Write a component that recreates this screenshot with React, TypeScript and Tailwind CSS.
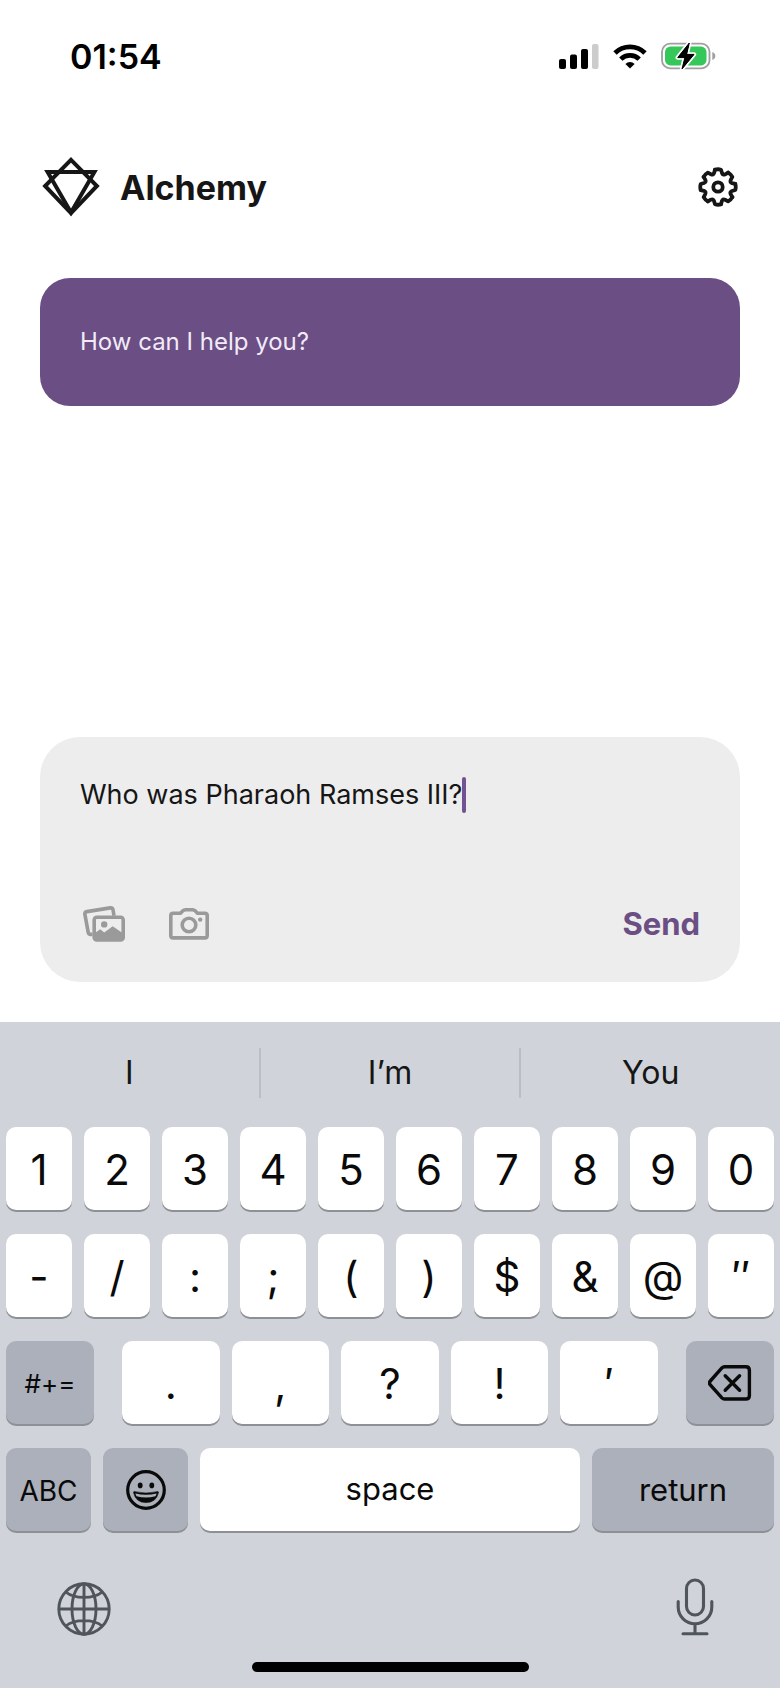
import { useState, type ReactNode } from "react";

function SignalIcon() {
  return (
    <svg width="40" height="26" viewBox="0 0 40 26" aria-hidden="true">
      <rect x="0" y="16" width="7" height="10" rx="2" />
      <rect x="11" y="11.5" width="7" height="14.5" rx="2" />
      <rect x="22" y="6" width="7" height="20" rx="2" />
      <rect x="33" y="1" width="6.5" height="25" rx="2" fill="#cccccc" />
    </svg>
  );
}

function WifiIcon() {
  return (
    <svg width="34" height="26" viewBox="0 0 34 26" fill="none" stroke="#000" strokeWidth="4.8" aria-hidden="true">
      <path d="M2 10a21.400 21.400 0 0 1 30 0" />
      <path d="M7.800 16.100a13.200 13.200 0 0 1 18.400 0" />
      <path d="M17 25.600l-4.600-4.700a6.600 6.600 0 0 1 9.200 0z" fill="#000" stroke="none" />
    </svg>
  );
}

function BatteryIcon() {
  return (
    <svg width="55" height="28" viewBox="0 0 55 28" aria-hidden="true">
      <rect x="1" y="1.7" width="47.5" height="24.6" rx="8" fill="none" stroke="#9f9f9f" strokeWidth="1.8" />
      <rect x="4" y="4.6" width="41.5" height="18.8" rx="5.5" fill="#35c759" />
      <path d="M51.3 10c2.1.7 3 2 3 4s-.9 3.3-3 4z" fill="#9f9f9f" />
      <path
        d="M28.3 1L16.7 15.6h7.2L21 27 33 12.4h-7.4z"
        fill="#000"
        stroke="#fff"
        strokeWidth="4.4"
        strokeLinejoin="round"
        paintOrder="stroke"
      />
      <path d="M28.3 1L16.7 15.6h7.2L21 27 33 12.4h-7.4z" stroke="#000" strokeLinejoin="round" />
    </svg>
  );
}

function Logo() {
  return (
    <svg width="58" height="60" viewBox="0 0 58 60" fill="none" stroke="#161616" strokeWidth="4" aria-hidden="true">
      <path d="M29 2.900L54.900 29 29 56.200 3.100 29z" />
      <path d="M5.600 15h46.800L29 55.400z" />
    </svg>
  );
}

const TOOTH_ANGLES = [0, 45, 90, 135, 180, 225, 270, 315];

function GearIcon() {
  return (
    <svg
      width="40"
      height="40"
      viewBox="-20 -20 40 40"
      fill="none"
      stroke="#161616"
      strokeWidth="3.8"
      strokeLinecap="round"
      strokeLinejoin="round"
      aria-hidden="true"
    >
      {TOOTH_ANGLES.map((angle) => (
        <path
          key={angle}
          d="M-3-17.3Q0-18.2 3-17.3L4-14Q4.9-11.6 7.2-12.7L10.1-14.4"
          transform={`rotate(${angle})`}
        />
      ))}
      <circle r="4.7" />
    </svg>
  );
}

function ImagesIcon() {
  return (
    <svg width="42" height="36" viewBox="0 0 42 36" fill="none" stroke="#9a9a9a" strokeWidth="3.6" strokeLinejoin="round" aria-hidden="true">
      <path d="M9.5 28.4H7.6Q5.6 28.3 5.2 26.3L1.9 8.4Q1.6 6.1 3.9 5.6L27.2 1.9Q29.4 1.6 30 3.7L31 9.8" />
      <rect x="11.2" y="11.2" width="29" height="22.8" rx="2.6" />
      <path d="M11.2 27.400l6-4.200 4 3.400 8.500-6.400L40.200 27.400V32q0 2-2 2H13.200q-2 0-2-2z" fill="#9a9a9a" stroke="none" />
      <circle cx="21.2" cy="18.4" r="3.2" fill="#9a9a9a" stroke="none" />
    </svg>
  );
}

function CameraIcon() {
  return (
    <svg width="40" height="32" viewBox="0 0 40 32" fill="none" stroke="#9a9a9a" strokeWidth="3.6" strokeLinejoin="round" aria-hidden="true">
      <path d="M4.2 5.2h7.3l2.4-2.4q1-1 2.5-1h7.200q1.500 0 2.500 1l2.400 2.400h7.300q2.400 0 2.400 2.400V27.500q0 2.400-2.400 2.400H4.200q-2.400 0-2.400-2.400V7.600q0-2.400 2.400-2.400z" />
      <circle cx="20" cy="17" r="6.8" />
      <circle cx="31.200" cy="11.600" r="2.200" fill="#9a9a9a" stroke="none" />
    </svg>
  );
}

function DeleteIcon() {
  return (
    <svg width="44" height="36" viewBox="0 0 44 36" fill="none" stroke="#0a0a0a" strokeWidth="3.4" strokeLinecap="round" strokeLinejoin="round" aria-hidden="true">
      <path d="M16.500 1.800H37.800q3.600 0 3.600 3.600V30.400q0 3.600-3.600 3.600H16.500q-1.500 0-2.600-1.100L2.300 19.800q-1.700-1.900 0-3.800L13.900 2.900q1.100-1.100 2.600-1.100z" />
      <path d="M17.200 10.800l14.400 14.400M31.600 10.800L17.200 25.200" />
    </svg>
  );
}

function SmileIcon() {
  return (
    <svg width="40" height="40" viewBox="0 0 40 40" aria-hidden="true">
      <circle cx="20" cy="20" r="18.3" fill="none" stroke="#0a0a0a" strokeWidth="3.2" />
      <ellipse cx="14.2" cy="15.4" rx="2.4" ry="2.8" fill="#0a0a0a" />
      <ellipse cx="25.8" cy="15.4" rx="2.4" ry="2.8" fill="#0a0a0a" />
      <path
        d="M8.200 21.600q11.800 3 23.600 0 .8 0 .6 1.200Q30.200 32.600 20 32.600T7.600 22.800q-.2-1.200.6-1.200z"
        fill="#0a0a0a"
        stroke="#0a0a0a"
        strokeWidth=".6"
      />
      <path d="M9.400 23.400q10.600 2.600 21.200 0-.4 1.600-1.200 2.800-9.400 2.600-18.800 0-.8-1.200-1.200-2.800z" fill="#abb0ba" />
    </svg>
  );
}

function GlobeIcon() {
  return (
    <svg width="54" height="54" viewBox="0 0 54 54" fill="none" stroke="#50555c" strokeWidth="2.9" aria-hidden="true">
      <circle cx="27" cy="27" r="25.2" />
      <ellipse cx="27" cy="27" rx="12" ry="25.2" />
      <path d="M27 2v50M2 27h50M8.800 10q6.400 5.400 18.200 5.400T45.200 10M8.800 44q6.400-5.400 18.200-5.400T45.200 44" />
    </svg>
  );
}

function MicIcon() {
  return (
    <svg width="38" height="58" viewBox="0 0 38 58" fill="none" stroke="#50555c" strokeWidth="3.1" strokeLinecap="round" aria-hidden="true">
      <rect x="10.500" y="2" width="17" height="35" rx="8.500" />
      <path d="M2.200 23.500v5.500a16.800 16.800 0 0 0 33.600 0v-5.500M19 46v9.800M7 55.800h24" />
    </svg>
  );
}

type KeyProps = { label?: string; dark?: boolean; className?: string; children: ReactNode };

function Key({ label, dark = false, className = "flex-1 pt-[2px] text-[42px]", children }: KeyProps) {
  return (
    <button
      type="button"
      aria-label={label}
      className={`flex h-[83px] items-center justify-center rounded-[10px] text-[#0a0a0a] shadow-[0_2px_0_#8d9095] ${
        dark ? "bg-[#abb0ba]" : "bg-white"
      } ${className}`}
    >
      {children}
    </button>
  );
}

const SUGGESTIONS = ["I", "I’m", "You"];
const DIGITS = ["1", "2", "3", "4", "5", "6", "7", "8", "9", "0"];
const SYMBOLS = ["-", "/", ":", ";", "(", ")", "$", "&", "@", "″"];
const PUNCTUATION = [".", ",", "?", "!", "′"];

function Keyboard() {
  return (
    <section aria-label="Keyboard" className="flex flex-col bg-[#d0d3d9] pb-4">
      <div className="flex h-[105px] items-center pb-1">
        {SUGGESTIONS.map((word, i) => (
          <button
            key={word}
            type="button"
            className={`h-[50px] flex-1 text-[32px] leading-[50px] text-[#161616] ${
              i > 0 ? "border-l-2 border-[#bbbec3]" : ""
            }`}
          >
            {word}
          </button>
        ))}
      </div>
      <div className="flex flex-col gap-6 px-[6px]">
        <div className="flex gap-3">
          {DIGITS.map((k) => (
            <Key key={k}>{k}</Key>
          ))}
        </div>
        <div className="flex gap-3">
          {SYMBOLS.map((k) => (
            <Key key={k}>{k}</Key>
          ))}
        </div>
        <div className="flex gap-7">
          <Key dark className="w-[88px] pt-[2px] text-[26px]">#+=</Key>
          <div className="flex flex-1 gap-3">
            {PUNCTUATION.map((k) => (
              <Key key={k}>{k}</Key>
            ))}
          </div>
          <Key dark label="Delete" className="w-[88px]">
            <DeleteIcon />
          </Key>
        </div>
        <div className="flex gap-3">
          <Key dark className="w-[85px] pt-[2px] text-[28px]">ABC</Key>
          <Key dark label="Emoji" className="w-[85px]">
            <SmileIcon />
          </Key>
          <Key className="flex-1 text-[31px]">space</Key>
          <Key dark className="w-[182px] pt-[2px] text-[31px]">return</Key>
        </div>
      </div>
      <div className="flex items-start justify-between pt-[47px] pr-[66px] pl-[57px]">
        <button type="button" aria-label="Next keyboard" className="pt-1">
          <GlobeIcon />
        </button>
        <button type="button" aria-label="Dictate">
          <MicIcon />
        </button>
      </div>
      <div className="mt-[26px] h-[10px] w-[277px] self-center rounded-full bg-black" />
    </section>
  );
}

export default function App() {
  const [draft, setDraft] = useState("Who was Pharaoh Ramses III?");

  return (
    <div className="flex min-h-screen flex-col bg-white font-['Inter','Liberation_Sans',sans-serif] text-[#161616]">
      <div className="flex h-[112px] items-center justify-between pr-[64px] pl-[70px]">
        <span className="text-[34px] font-semibold text-black">01:54</span>
        <div className="flex items-center gap-[14px]">
          <SignalIcon />
          <WifiIcon />
          <BatteryIcon />
        </div>
      </div>

      <header className="flex h-[150px] items-center justify-between pr-[42px] pl-[42px]">
        <div className="flex items-center gap-5">
          <Logo />
          <h1 className="text-[34px] font-bold">Alchemy</h1>
        </div>
        <button type="button" aria-label="Settings">
          <GearIcon />
        </button>
      </header>

      <main className="flex flex-1 flex-col px-10 pt-4 pb-10">
        <p className="rounded-[30px] bg-[#6a4e84] px-10 py-12 text-[24px] leading-[32px] text-[#f1ebf7]">
          How can I help you?
        </p>

        <form
          className="mt-auto flex flex-col rounded-[40px] bg-[#ededed] px-10 pt-10 pb-7"
          onSubmit={(e) => e.preventDefault()}
        >
          <div className="flex h-[117px] items-start">
            <textarea
              aria-label="Message"
              rows={1}
              value={draft}
              onChange={(e) => setDraft(e.target.value)}
              className="block max-w-full resize-none bg-transparent text-[27px] leading-9 caret-transparent outline-none [field-sizing:content]"
            />
            <span className="h-9 w-1 shrink-0 rounded-full bg-[#735294]" />
          </div>
          <div className="flex h-[60px] items-center">
            <button type="button" aria-label="Add images" className="ml-[3px]">
              <ImagesIcon />
            </button>
            <button type="button" aria-label="Take photo" className="ml-11">
              <CameraIcon />
            </button>
            <button type="submit" className="ml-auto text-[31px] font-bold text-[#6a4e84]">
              Send
            </button>
          </div>
        </form>
      </main>

      <Keyboard />
    </div>
  );
}
